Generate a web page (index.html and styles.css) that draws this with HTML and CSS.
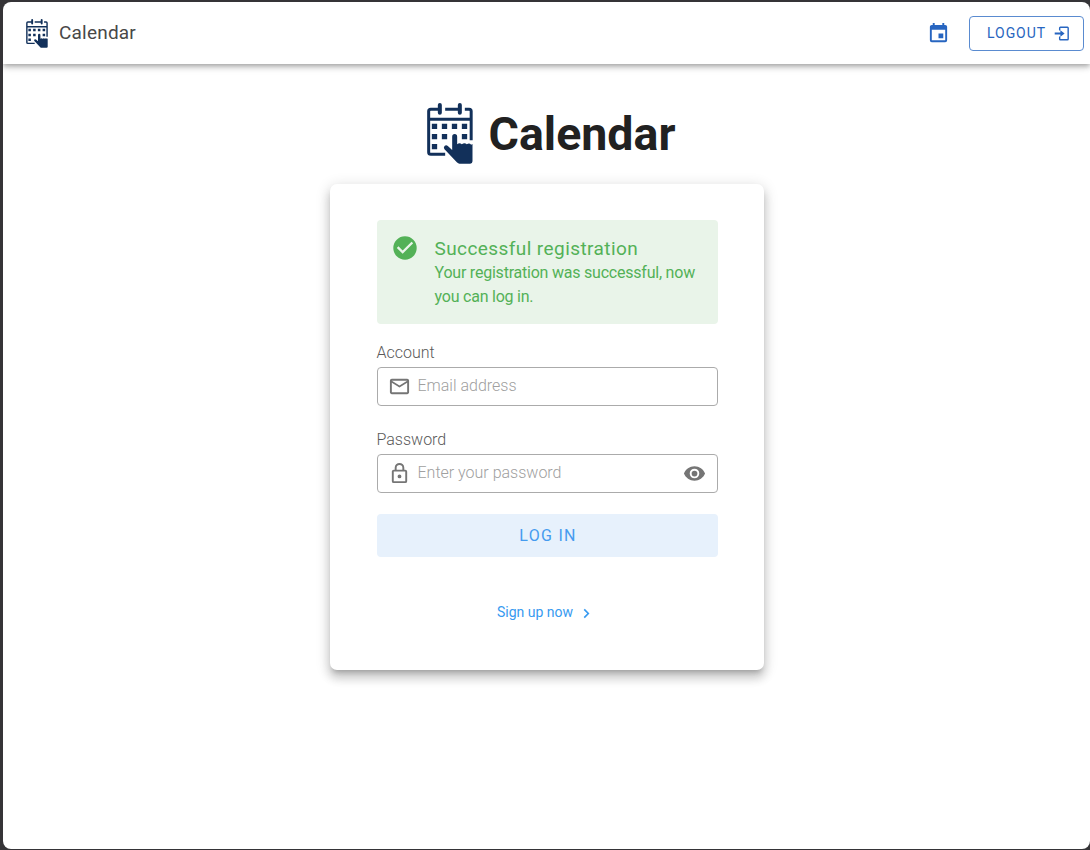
FILE: index.html
```html
<!DOCTYPE html>
<html lang="en">
<head>
<meta charset="utf-8">
<title>Calendar</title>
<link rel="stylesheet" href="styles.css">
</head>
<body>
<svg class="defs" width="0" height="0">
  <symbol id="logo" viewBox="0 0 137 183">
    <path fill="none" stroke="currentColor" stroke-width="9" stroke-linecap="butt" d="M38 19H11Q4.500 19 4.500 25V148Q4.500 154 11 154H54M54 19H98M113 19H126Q132 19 132 25V112M4 49H132"/>
    <path fill="none" stroke="currentColor" stroke-width="12" stroke-linecap="round" d="M38 6V29M98 6V29"/>
    <path fill="currentColor" d="M14 62h16v16H14zM44 62h16v16H44zM74 62h16v16H74zM104 62h16v16h-16zM14 93h16v16H14zM44 93h16v16H44zM104 93h16v16h-16zM14 123h16v16H14z"/>
    <path fill="currentColor" d="M75 141V101Q75 93 82.500 93Q90 93 90 101V124Q97 118 104 124Q112 118 119 124Q126 118 132 125L136 123V175Q136 182 129 182H97Q93 182 89 178L52 139Q48 134 52 129Q57 125 62 129Z"/>
  </symbol>
</svg>
<div class="window">
  <header class="bar">
    <svg class="bar-logo"><use href="#logo"/></svg>
    <span class="bar-title">Calendar</span>
    <svg class="event" viewBox="0 0 24 24"><path d="M19 19H5V8h14m-3-7v2H8V1H6v2H5c-1.110 0-2 .89-2 2v14a2 2 0 0 0 2 2h14a2 2 0 0 0 2-2V5a2 2 0 0 0-2-2h-1V1m-1 11h-5v5h5v-5z"/></svg>
    <button class="logout">LOGOUT
      <svg viewBox="0 0 24 24"><path d="M19 3H9a2 2 0 0 0-2 2v3h2V5h10v14H9v-3H7v3a2 2 0 0 0 2 2h10a2 2 0 0 0 2-2V5a2 2 0 0 0-2-2z" transform="translate(0 -1.200) scale(1 1.100)"/><path d="M1 10.500h8V7.300L15 12 9 16.700v-3.200H1z"/></svg>
    </button>
  </header>
  <main>
    <div class="brand">
      <svg class="brand-logo"><use href="#logo"/></svg>
      <h1>Calendar</h1>
    </div>
    <section class="card">
      <div class="alert">
        <svg viewBox="0 0 24 24"><path d="M12 .3A11.700 11.700 0 1 0 12 23.700 11.700 11.700 0 0 0 12 .3zM9.660 17.850 3.810 12l1.650-1.650 4.200 4.190 8.880-8.880 1.650 1.660z"/></svg>
        <div>
          <div class="alert-title">Successful registration</div>
          <div class="alert-text">Your registration was successful, now you can log in.</div>
        </div>
      </div>
      <label class="label" for="email">Account</label>
      <div class="field">
        <svg viewBox="0 0 24 24"><path d="M22 6c0-1.100-.9-2-2-2H4c-1.100 0-2 .9-2 2v12c0 1.100.9 2 2 2h16c1.100 0 2-.9 2-2V6zm-2 0-8 5-8-5h16zm0 12H4V8l8 5 8-5v10z"/></svg>
        <input id="email" type="text" placeholder="Email address">
      </div>
      <label class="label second" for="password">Password</label>
      <div class="field">
        <svg viewBox="0 0 24 24"><path d="M12 17a2 2 0 0 1-2-2c0-1.110.89-2 2-2a2 2 0 0 1 0 4zm6 3V10H6v10h12zm0-12a2 2 0 0 1 2 2v10a2 2 0 0 1-2 2H6a2 2 0 0 1-2-2V10c0-1.110.89-2 2-2h1V6a5 5 0 0 1 10 0v2h1zm-6-5a3 3 0 0 0-3 3v2h6V6a3 3 0 0 0-3-3z"/></svg>
        <input id="password" type="password" placeholder="Enter your password">
        <svg viewBox="0 0 24 24"><path d="M12 9a3 3 0 1 0 0 6 3 3 0 0 0 0-6m0 8a5 5 0 1 1 0-10 5 5 0 0 1 0 10m0-12.500C7 4.500 2.730 7.610 1 12c1.730 4.390 6 7.500 11 7.500s9.270-3.110 11-7.500c-1.730-4.390-6-7.500-11-7.500z"/></svg>
      </div>
      <button class="login">LOG IN</button>
      <a class="signup">Sign up now
        <svg viewBox="0 0 24 24"><path d="M8 17 13 12 8 7 9.600 5.400l6.600 6.600-6.600 6.600z"/></svg>
      </a>
    </section>
  </main>
</div>
</body>
</html>
```
FILE: styles.css
```css
* { box-sizing: border-box; }
body {
  margin: 0;
  height: 850px;
  padding: 2px 0 1px 3px;
  overflow: hidden;
  background: #353437;
  font-family: Roboto, sans-serif;
}
svg { fill: currentColor; flex: none; }
.defs { display: block; height: 0; }
.window {
  height: 847px;
  background: #fff;
  border-radius: 8px;
  overflow: hidden;
}
.bar {
  display: flex;
  align-items: center;
  height: 62px;
  padding: 0 6px 0 23px;
  box-shadow: 0 2px 4px -1px rgba(0,0,0,.2), 0 4px 5px rgba(0,0,0,.14), 0 1px 10px rgba(0,0,0,.12);
}
.bar-logo { width: 22px; height: 29px; color: #12305a; }
.bar-title {
  margin-left: 11px;
  font-size: 19px;
  line-height: 24px;
  font-weight: 400;
  color: #484848;
  letter-spacing: .2px;
}
.event { width: 23px; height: 23px; margin: 0 -1px 0 auto; color: #2765c0; }
.logout {
  display: flex;
  align-items: center;
  justify-content: space-between;
  width: 115px;
  height: 35px;
  margin: 0 0 0 20px;
  padding: 0 12px 0 17px;
  border: 1px solid #5a8bd0;
  border-radius: 4px;
  background: transparent;
  color: #2765c0;
  font: 400 14px Roboto, sans-serif;
  letter-spacing: .950px;
}
.logout svg { width: 17px; height: 17px; }
main { display: flex; flex-direction: column; align-items: center; padding-top: 37px; }
.brand { display: flex; align-items: flex-start; gap: 16px; height: 83px; margin-left: 9px; }
.brand-logo { width: 46px; height: 61px; margin-top: 2px; color: #12305a; }
h1 { margin: 3px 0 0; font-size: 46.500px; line-height: 60px; font-weight: 700; color: #212121; }
.card {
  display: flex;
  flex-direction: column;
  width: 434px;
  height: 486px;
  padding: 36px 46px 0 47px;
  border-radius: 7px;
  background: #fff;
  box-shadow: 0 5px 5px -3px rgba(0,0,0,.2), 0 8px 10px 1px rgba(0,0,0,.14), 0 3px 14px 2px rgba(0,0,0,.12);
}
.alert {
  display: flex;
  gap: 17.500px;
  height: 104px;
  padding: 16px 16px 0 16.500px;
  border-radius: 4px;
  background: #e9f4e9;
  color: #53b157;
}
.alert > svg { width: 24px; height: 24px; }
.alert-title { padding-top: 1px; font-size: 19px; line-height: 23px; letter-spacing: .42px; }
.alert-text { padding-top: 1px; font-size: 16px; line-height: 24px; letter-spacing: -.22px; }
.label {
  margin-top: 18px;
  height: 25px;
  font-size: 16px;
  line-height: 22px;
  font-weight: 300;
  color: #595959;
}
.second { margin-top: 23px; }
.field {
  display: flex;
  align-items: center;
  height: 39px;
  padding: 0 11px;
  border: 1px solid #ababab;
  border-radius: 4px;
  color: #757575;
}
.field svg { width: 23px; height: 23px; }
.field svg:first-child { margin-left: -1px; }
.field input {
  flex: 1;
  min-width: 0;
  margin-left: 7px;
  padding: 0 0 2px;
  border: 0;
  outline: 0;
  font: 300 16px Roboto, sans-serif;
}
.field input::placeholder { color: #a0a0a0; opacity: 1; }
.login {
  height: 43px;
  flex: none;
  margin-top: 21px;
  padding-left: 8px;
  border: 0;
  border-radius: 4px;
  background: #e7f1fc;
  color: #459bef;
  font: 400 16px Roboto, sans-serif;
  letter-spacing: 1.300px;
}
.signup {
  display: flex;
  align-items: center;
  justify-content: center;
  gap: 5px;
  height: 20px;
  margin: 45px 2px 0 0;
  font-size: 14px;
  color: #379af0;
}
.signup svg { width: 17px; height: 17px; margin-top: 2px; }
```
